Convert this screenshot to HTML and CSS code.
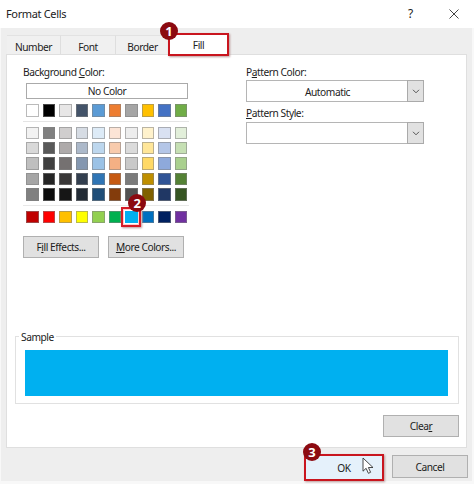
FILE: index.html
```html
<!DOCTYPE html>
<html lang="en">
<head>
<meta charset="utf-8">
<title>Format Cells</title>
<link rel="stylesheet" href="styles.css">
</head>
<body>
<main class="dialog">
  <header class="titlebar">
    <span class="title">Format Cells</span>
    <span class="help">?</span>
    <svg class="close" viewBox="0 0 10 10"><path d="M.5 .5l9 9M9.5 .5l-9 9"/></svg>
  </header>
  <div class="body">
    <nav class="tabs">
      <span class="tab number">Number</span>
      <span class="tab font">Font</span>
      <span class="tab border">Border</span>
      <span class="tab fill">Fill<b class="badge one">1</b></span>
    </nav>
    <section class="panel">
      <div class="columns">
        <div class="background">
          <div class="label">Background <u>C</u>olor:</div>
          <div class="nocolor">No Color</div>
          <div class="swatches" id="theme"></div>
          <div class="swatches shades" id="shades"></div>
          <div class="swatches standard" id="standard"></div>
          <div class="actions">
            <button class="btn">F<u>i</u>ll Effects...</button>
            <button class="btn"><u>M</u>ore Colors...</button>
          </div>
        </div>
        <div class="pattern">
          <div class="label">P<u>a</u>ttern Color:</div>
          <div class="combo"><span>Automatic</span><i><svg viewBox="0 0 8 5"><path d="M1 .8l3 3 3-3"/></svg></i></div>
          <div class="label second"><u>P</u>attern Style:</div>
          <div class="combo"><span></span><i><svg viewBox="0 0 8 5"><path d="M1 .8l3 3 3-3"/></svg></i></div>
        </div>
      </div>
      <div class="sample"><span class="legend">Sample</span><div class="preview"></div></div>
      <button class="btn clear">Clea<u>r</u></button>
    </section>
    <footer class="footer">
      <button class="btn ok"><span>OK</span><b class="badge three">3</b><svg class="cursor" viewBox="0 0 12 18"><path d="M1 1v13.2l3.1-2.9 2.3 5 2.2-1-2.2-4.8H11z"/></svg></button>
      <button class="btn cancel">Cancel</button>
    </footer>
  </div>
</main>
<script src="script.js"></script>
</body>
</html>
```
FILE: styles.css
```css
* { box-sizing: border-box; }
body {
  margin: 0;
  background: #fff;
  font: 10.2px/14px "Noto Sans", "Open Sans", sans-serif;
  letter-spacing: -0.45px;
  color: #222;
}
u { text-underline-offset: 1px; text-decoration-thickness: 1px; }
.dialog { width: 474px; height: 484px; overflow: hidden; background: #f8f8f8; }
.titlebar {
  display: flex;
  align-items: center;
  height: 28px;
  padding: 0 15px 0 6px;
  background: #fff;
}
.title { flex: 1; font-size: 11px; letter-spacing: -.35px; }
.help { width: 7px; margin-right: 34px; font-size: 12px; }
.close { width: 10px; height: 10px; fill: none; stroke: #444; stroke-width: 1; }
.body { height: 453px; margin: 0 2px 0 1px; padding: 7px 5px 0 5px; background: #eee; }
.tabs { display: flex; height: 19px; padding-left: 1px; }
.tab {
  height: 19px;
  padding-top: 4px;
  border-top: 1px solid #e2e2e2;
  border-right: 1px solid #dedede;
  background: #f0f0f0;
  text-align: center;
}
.number { width: 54px; }
.font { width: 55px; }
.border { width: 54px; }
.fill {
  position: relative;
  z-index: 2;
  width: 61px;
  height: 23px;
  margin: -2px 0 0 -2px;
  padding-top: 3px;
  border: 2px solid #c9151e;
  background: #fff;
  box-shadow: 1px 1px 2px #b99;
}
.badge {
  position: absolute;
  display: flex;
  align-items: center;
  justify-content: center;
  width: 18px;
  height: 18px;
  border-radius: 50%;
  background: #8c0a10;
  color: #fff;
  font: bold 13px/18px "Open Sans", sans-serif;
  letter-spacing: 0;
}
.one { left: -10px; top: -13px; }
.panel {
  height: 394px;
  padding: 10px 7px 0 8px;
  border: 1px solid #dfdfdf;
  background: #fff;
}
.columns { display: flex; height: 271px; padding-left: 8px; }
.background { width: 223px; }
.label { height: 16px; }
.nocolor {
  width: 162px;
  height: 16px;
  margin: 2px 0 5px 3px;
  border: 1px solid #aaa;
  line-height: 15px;
  text-align: center;
}
.swatches {
  display: grid;
  grid-template-columns: repeat(10, 12.5px);
  column-gap: 4.05px;
  row-gap: 2.9px;
  width: 166px;
  padding-left: 3px;
}
.swatches span { height: 12.5px; border: 1px solid rgba(130, 130, 130, .55); }
.shades {
  margin: 4px 0 5px;
  padding-top: 5px;
  padding-bottom: 4px;
  border-top: 1px solid #e4e4e4;
  border-bottom: 1px solid #e8e8e8;
}
.swatches .picked { position: relative; border: 0; }
.picked::before {
  content: "";
  position: absolute;
  inset: -4px -3px -4px -4px;
  border: 2px solid #d51c27;
  box-shadow: 1px 1px 2px #b99, inset 0 0 0 1px #fcc;
}
.two { left: 3px; top: -17px; }
.btn {
  display: flex;
  align-items: center;
  justify-content: center;
  width: 76px;
  height: 22px;
  padding: 0;
  border: 1px solid #b0b0b0;
  background: #e1e1e1;
  color: inherit;
  font: inherit;
  letter-spacing: inherit;
  white-space: pre;
}
.actions { display: flex; gap: 9px; margin-top: 13px; }
.combo { display: flex; width: 178px; height: 22px; border: 1px solid #b5b5b5; }
.combo span { flex: 1; padding-top: 4px; text-align: center; }
.combo i {
  display: flex;
  align-items: center;
  justify-content: center;
  width: 17px;
  margin: -1px;
  border: 1px solid #aaa;
  background: #e1e1e1;
}
.combo svg { width: 8px; height: 5px; fill: none; stroke: #555; stroke-width: 1; }
.pattern .label { height: 15px; }
.pattern .second { height: 20px; padding-top: 4px; }
.sample { position: relative; height: 68px; padding: 13px 10px 0 9px; border: 1px solid #e1e1e1; }
.legend { position: absolute; left: 3px; top: -7px; padding: 0 2px; background: #fff; }
.preview { height: 46px; background: #00b0f0; }
.clear { margin: 11px 0 0 auto; }
.footer { display: flex; justify-content: flex-end; gap: 8px; padding-top: 6px; margin-right: -1px; }
.ok {
  position: relative;
  width: 80px;
  height: 27px;
  border: 2px solid #c9151e;
  background: #e5f1fb;
  box-shadow: 1px 1px 2px #b99;
}
.cancel { width: 76px; height: 23px; margin-top: 1px; }
.three { left: -3px; top: -13px; }
.cursor { position: absolute; left: 56px; top: 1px; width: 12px; height: 18px; fill: #fff; stroke: #333; stroke-width: .9; }
```
FILE: script.js
```js
const palettes = {
  theme: "#ffffff #000000 #e7e6e6 #44546a #5b9bd5 #ed7d31 #a5a5a5 #ffc000 #4472c4 #70ad47",
  shades: `#f2f2f2 #808080 #d0cece #d6dce4 #ddebf7 #fce4d6 #ededed #fff2cc #d9e1f2 #e2efda
    #d9d9d9 #595959 #aeaaaa #acb9ca #bdd7ee #f8cbad #dbdbdb #ffe699 #b4c6e7 #c6e0b4
    #bfbfbf #404040 #757171 #8497b0 #9bc2e6 #f4b084 #c9c9c9 #ffd966 #8ea9db #a9d08e
    #a6a6a6 #262626 #3a3838 #333f4f #2f75b5 #c65911 #7b7b7b #bf8f00 #305496 #548235
    #808080 #0d0d0d #161616 #222b35 #1f4e78 #833c0c #525252 #806000 #203764 #375623`,
  standard: "#c00000 #ff0000 #ffc000 #ffff00 #92d050 #00b050 #00b0f0 #0070c0 #002060 #7030a0"
};

for (const [id, list] of Object.entries(palettes)) {
  const grid = document.getElementById(id);
  for (const color of list.trim().split(/\s+/)) {
    const cell = document.createElement("span");
    cell.style.background = color;
    if (id === "standard" && color === "#00b0f0") {
      cell.className = "picked";
      cell.innerHTML = '<b class="badge two">2</b>';
    }
    grid.append(cell);
  }
}
```
